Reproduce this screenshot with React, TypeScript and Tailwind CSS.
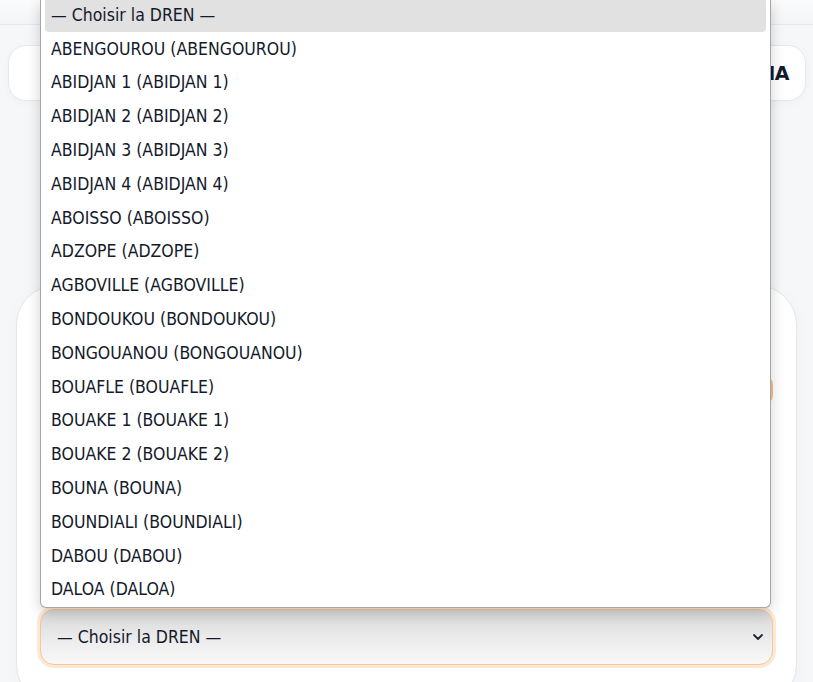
import React from "react";

const DRENS = [
  "ABENGOUROU (ABENGOUROU)",
  "ABIDJAN 1 (ABIDJAN 1)",
  "ABIDJAN 2 (ABIDJAN 2)",
  "ABIDJAN 3 (ABIDJAN 3)",
  "ABIDJAN 4 (ABIDJAN 4)",
  "ABOISSO (ABOISSO)",
  "ADZOPE (ADZOPE)",
  "AGBOVILLE (AGBOVILLE)",
  "BONDOUKOU (BONDOUKOU)",
  "BONGOUANOU (BONGOUANOU)",
  "BOUAFLE (BOUAFLE)",
  "BOUAKE 1 (BOUAKE 1)",
  "BOUAKE 2 (BOUAKE 2)",
  "BOUNA (BOUNA)",
  "BOUNDIALI (BOUNDIALI)",
  "DABOU (DABOU)",
  "DALOA (DALOA)",
];

const font = { fontFamily: '"DejaVu Sans Condensed", "DejaVu Sans", sans-serif' };

function Chevron() {
  return (
    <svg width="12" height="8" viewBox="0 0 12 8" fill="none">
      <path d="M2 2 L6 6 L10 2" stroke="#1f2433" strokeWidth="1.8" strokeLinecap="round" strokeLinejoin="round" />
    </svg>
  );
}

export default function App() {
  return (
    <div className="relative h-[682px] w-[813px] overflow-hidden bg-[#f6f7f9]" style={font}>
      {/* top bar */}
      <div className="h-[25px] border-b border-[#e6e8ec] bg-gradient-to-b from-[#fbfbfc] to-[#f4f5f7]" />

      {/* header card */}
      <div className="ml-[8px] mr-[7px] mt-[20px] flex h-[56px] items-center justify-end rounded-[18px] border border-[#e6e8ec] bg-white pr-[16px] shadow-[0_2px_8px_rgba(0,0,0,0.03)]">
        <span className="text-[19px] font-bold tracking-tight text-[#141a2b]" style={{ fontFamily: '"DejaVu Sans", sans-serif' }}>
          DREN IA
        </span>
      </div>

      {/* main card */}
      <div className="mx-[16px] mt-[184px] h-[420px] rounded-[40px] border border-[#e4e6ea] bg-white px-[20px] pt-[86px] shadow-[0_4px_16px_rgba(0,0,0,0.03)]">
        <div className="mx-[3px] h-[36px] rounded-[14px] border-2 border-[#f2c08a] bg-[#f3f4f6]" />
        <div className="mt-[198px] rounded-[17px] bg-[#fde8d4] p-[3px]">
          <div className="flex h-[56px] items-center justify-between rounded-[14px] border border-[#f6c797] bg-gradient-to-b from-[#d6d6d6] via-[#ebebeb] to-[#f8f8f8] pl-[16px] pr-[8px]">
            <span className="text-[17.5px] text-[#141a2b]">— Choisir la DREN —</span>
            <Chevron />
          </div>
        </div>
      </div>

      {/* open option list */}
      <div className="absolute left-[40px] top-0 h-[608px] w-[731px] overflow-hidden rounded-b-[6px] border border-t-0 border-[#a6a6a6] bg-white shadow-[0_4px_14px_rgba(0,0,0,0.18)]">
        <div className="-mt-[2px] flex flex-col px-[4px]">
          <div className="flex h-[33.8px] items-center rounded-[4px] bg-[#e1e1e1] px-[6px] text-[17.5px] text-[#141a2b]">
            — Choisir la DREN —
          </div>
          {DRENS.map((d) => (
            <div key={d} className="flex h-[33.8px] items-center px-[6px] text-[17.5px] text-[#141a2b]">
              {d}
            </div>
          ))}
        </div>
      </div>
    </div>
  );
}
